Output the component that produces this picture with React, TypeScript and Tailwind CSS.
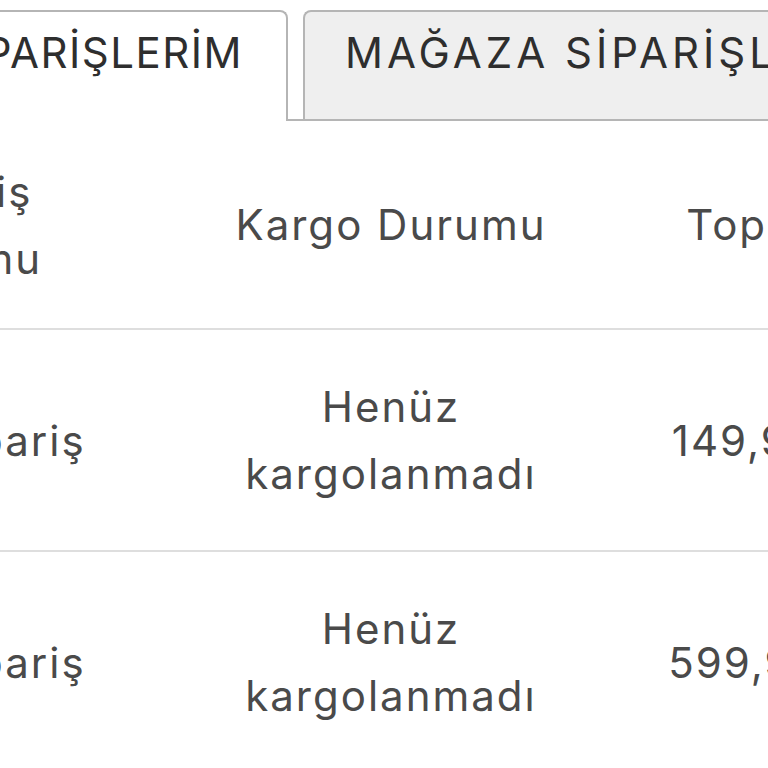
import React from "react";

interface Order {
  status: string;
  cargo: string;
  total: string;
}

const orders: Order[] = [
  { status: "Yeni Sipariş", cargo: "Henüz kargolanmadı", total: "149,90 ₺" },
  { status: "Yeni Sipariş", cargo: "Henüz kargolanmadı", total: "599,90 ₺" },
];

const App: React.FC = () => {
  return (
    <div className="w-[768px] h-[768px] overflow-hidden bg-white font-['Inter','Liberation_Sans',sans-serif] text-[#4a4a4a]">
      {/* sekmeler */}
      <div className="flex pt-[10px]">
        <div className="w-[288px] shrink-0 h-[111px] flex justify-end border-t-2 border-r-2 border-[#b5b5b5] rounded-tr-[8px] bg-white pr-[43px] pt-[16px] text-[42px] leading-[50px] tracking-[1.5px] text-[#2e2e2e] whitespace-nowrap overflow-hidden">
          <span className="shrink-0">SİPARİŞLERİM</span>
        </div>
        <div className="flex-1 flex border-b-2 border-[#b5b5b5] min-w-0">
          <div className="ml-[15px] flex-1 h-[109px] border-t-2 border-l-2 border-[#b5b5b5] rounded-tl-[8px] bg-[#efefef] pl-[40px] pt-[16px] text-[42px] leading-[50px] tracking-[4px] text-[#2e2e2e] whitespace-nowrap overflow-hidden">
            MAĞAZA SİPARİŞLERİ
          </div>
        </div>
      </div>

      {/* tablo */}
      <div className="-ml-[240px] w-[1300px] text-[42px] leading-[67px] tracking-[2px]">
        <div className="grid grid-cols-[395px_472px_276px] h-[209px] items-center border-b-2 border-[#dedede] text-center">
          <div className="px-[50px]">Sipariş Durumu</div>
          <div className="px-[65px]">Kargo Durumu</div>
          <div className="whitespace-nowrap">Toplam</div>
        </div>
        {orders.map((order, index) => (
          <div
            key={index}
            className="grid grid-cols-[395px_472px_276px] h-[222px] items-center border-b-2 border-[#dedede] text-center"
          >
            <div className="px-[50px]">{order.status}</div>
            <div className="px-[65px]">{order.cargo}</div>
            <div className="whitespace-nowrap">{order.total}</div>
          </div>
        ))}
      </div>
    </div>
  );
};

export default App;
